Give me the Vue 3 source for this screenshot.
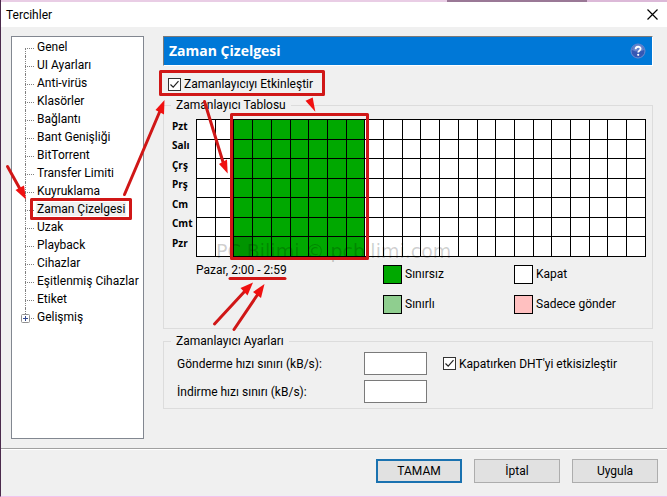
<script setup>
import { ref } from 'vue'

const pages = [
  'Genel',
  'UI Ayarları',
  'Anti-virüs',
  'Klasörler',
  'Bağlantı',
  'Bant Genişliği',
  'BitTorrent',
  'Transfer Limiti',
  'Kuyruklama',
  'Zaman Çizelgesi',
  'Uzak',
  'Playback',
  'Cihazlar',
  'Eşitlenmiş Cihazlar',
  'Etiket',
  'Gelişmiş',
]
const selected = ref('Zaman Çizelgesi')

const days = ['Pzt', 'Salı', 'Çrş', 'Prş', 'Cm', 'Cmt', 'Pzr']

const modes = [
  { id: 'full', label: 'Sınırsız' },
  { id: 'off', label: 'Kapat' },
  { id: 'limited', label: 'Sınırlı' },
  { id: 'seed', label: 'Sadece gönder' },
]

// 7 days x 24 hours, unlimited between 2:00 and 9:00
const schedule = ref(
  days.map(() => Array.from({ length: 24 }, (_, h) => (h >= 2 && h < 9 ? 'full' : 'off'))),
)

const schedulerOn = ref(true)
const disableDht = ref(true)
const uploadLimit = ref('')
const downloadLimit = ref('')

const toggleCell = (d, h) => {
  if (!schedulerOn.value) return
  schedule.value[d][h] = schedule.value[d][h] === 'full' ? 'off' : 'full'
}
</script>

<template>
  <div class="dialog">
    <div class="desktop-strip"></div>
    <header class="titlebar">
      <span>Tercihler</span>
      <button class="close" type="button" aria-label="Kapat">
        <svg width="11" height="11" viewBox="0 0 11 11">
          <path d="M.5.5l10 10M10.5.5l-10 10" stroke="#000" stroke-width="1.2" fill="none" />
        </svg>
      </button>
    </header>

    <div class="content">
      <nav class="tree">
        <ul>
          <li v-for="page in pages" :key="page" :class="{ parent: page === 'Gelişmiş' }">
            <span v-if="page === 'Gelişmiş'" class="expander">
              <svg width="9" height="9" viewBox="0 0 9 9">
                <rect x=".5" y=".5" width="8" height="8" rx="1" fill="#fff" stroke="#919191" />
                <path d="M2 4.5h5M4.5 2v5" stroke="#34498f" />
              </svg>
            </span>
            <a href="#" :class="{ active: page === selected }" @click.prevent="selected = page">{{
              page
            }}</a>
          </li>
        </ul>
      </nav>

      <main class="panel">
        <div class="panel-title">
          <h1>Zaman Çizelgesi</h1>
          <button class="help" type="button" aria-label="Yardım">
            <svg width="16" height="16" viewBox="0 0 16 16">
              <circle cx="8" cy="8" r="7" fill="#3558b4" stroke="#6d8bd0" />
              <path d="M2 7a6 6 0 0 1 12 0q-6 3-12 0z" fill="#6482cc" />
              <path
                d="M5.6 6.2c0-3.2 5-3.2 5-.4 0 1.7-2.400 1.900-2.400 3.700"
                fill="none"
                stroke="#fff"
                stroke-width="1.8"
              />
              <circle cx="8.2" cy="11.800" r="1.100" fill="#fff" />
            </svg>
          </button>
        </div>

        <label class="check enable">
          <input v-model="schedulerOn" type="checkbox" />
          <span>Zamanlayıcıyı Etkinleştir</span>
        </label>

        <fieldset class="group">
          <legend>Zamanlayıcı Tablosu</legend>
          <table class="schedule">
            <tbody>
              <tr v-for="(day, d) in days" :key="day">
                <th scope="row">{{ day }}</th>
                <td
                  v-for="(mode, h) in schedule[d]"
                  :key="h"
                  :class="[mode, { current: d === 6 && h === 2 }]"
                  @click="toggleCell(d, h)"
                ></td>
              </tr>
            </tbody>
          </table>
          <div class="below">
            <span class="time">Pazar, 2:00 - 2:59</span>
            <ul class="key">
              <li v-for="mode in modes" :key="mode.id">
                <i class="swatch" :class="mode.id"></i>
                <span>{{ mode.label }}</span>
              </li>
            </ul>
          </div>
        </fieldset>

        <fieldset class="group">
          <legend>Zamanlayıcı Ayarları</legend>
          <div class="limits">
            <label for="upload">Gönderme hızı sınırı (kB/s):</label>
            <input id="upload" v-model="uploadLimit" type="text" />
            <label class="check dht">
              <input v-model="disableDht" type="checkbox" />
              <span>Kapatırken DHT'yi etkisizleştir</span>
            </label>
            <label for="download">İndirme hızı sınırı (kB/s):</label>
            <input id="download" v-model="downloadLimit" type="text" />
          </div>
        </fieldset>
      </main>
    </div>

    <footer class="actions">
      <button class="default" type="button">TAMAM</button>
      <button type="button">İptal</button>
      <button type="button">Uygula</button>
    </footer>

    <span class="watermark">PC Bilimi © pcbilimi.com</span>

    <!-- Red guide marks drawn over the dialog -->
    <svg class="marks">
      <g class="line">
        <rect x="31.5" y="199.5" width="99" height="19" />
        <rect x="160.5" y="71.5" width="163" height="23" />
        <rect x="231.5" y="114.5" width="136" height="144" />
        <path d="M230 278.5H285" />
        <path d="M7.5 166.5L20 189" />
        <path d="M124.5 194.5L160 111" />
        <path d="M204.5 101.5L223 162" />
        <path d="M214.5 324L245 291" />
        <path d="M234 329.5L258 294" />
      </g>
      <g class="head">
        <path d="M26 199.5L15.5 190L24 185.5z" />
        <path d="M164.5 100L155.5 110L164 114.5z" />
        <path d="M227.7 173.5L219 164L227 159.5z" />
        <path d="M315.3 111.7L305.5 100.7L312.7 97.5z" />
        <path d="M253 282.5L240.5 288L247.5 295.5z" />
        <path d="M264.5 284L253 292L261 298z" />
      </g>
    </svg>
  </div>
</template>

<style>
body {
  margin: 0;
}
</style>

<style scoped>
.dialog {
  position: relative;
  display: flex;
  flex-direction: column;
  box-sizing: border-box;
  min-height: 100vh;
  border-left: 1px solid #4b2a4c;
  border-bottom: 1px solid #f3c3ee;
  background: #f0f0f0;
  color: #000;
  font-family: Roboto, 'Open Sans', sans-serif;
  font-size: 12px;
  line-height: 18px;
}

button,
input {
  font: inherit;
  color: inherit;
}

ul {
  list-style: none;
  margin: 0;
  padding: 0;
}

.desktop-strip {
  height: 2px;
  background: linear-gradient(90deg, #e9cde5 67%, #9a7896 67%, #9a7896 88%, #dcb9d8 88%);
}

.titlebar {
  display: flex;
  align-items: center;
  justify-content: space-between;
  height: 25px;
  padding: 0 9px 0 5px;
  background: #fff;
}

.close,
.help {
  display: flex;
  padding: 0;
  border: 0;
  background: none;
}

.content {
  display: flex;
  flex: 1;
  gap: 19px;
  padding: 9px 14px 9px 10px;
}

.tree {
  flex: none;
  box-sizing: border-box;
  width: 133px;
  padding: 1px 0 0 13px;
  border: 1px solid #828790;
  background: #fff;
}

.tree li {
  position: relative;
  height: 18px;
  padding-left: 11px;
  white-space: nowrap;
}

.tree li::before {
  content: '';
  position: absolute;
  top: 0;
  left: 0;
  height: 18px;
  border-left: 1px dotted #808080;
}

.tree li:first-child::before {
  top: 10px;
  height: 8px;
}

.tree li:last-child::before {
  height: 6px;
}

.tree li::after {
  content: '';
  position: absolute;
  top: 10px;
  left: 0;
  width: 9px;
  border-top: 1px dotted #808080;
}

.expander {
  position: absolute;
  z-index: 1;
  top: 6px;
  left: -4px;
  display: flex;
}

.tree a {
  padding: 0 1px;
  color: #000;
  text-decoration: none;
}

.tree a.active {
  background: #f0f0f0;
}

.panel {
  flex: 1;
  min-width: 0;
}

.panel-title {
  display: flex;
  align-items: center;
  justify-content: space-between;
  box-sizing: border-box;
  height: 30px;
  padding: 0 6px 0 5px;
  border: 1px solid;
  border-color: #7a7a7a #fff #fff #7a7a7a;
  background: #0078d7;
}

.panel-title h1 {
  margin: 0;
  color: #fff;
  font-family: 'Open Sans', sans-serif;
  font-size: 14px;
  font-weight: 700;
}

.check {
  display: flex;
  align-items: center;
  gap: 3px;
  white-space: nowrap;
}

.check input {
  appearance: none;
  flex: none;
  width: 13px;
  height: 13px;
  margin: 0;
  border: 1px solid #333;
  background: #fff;
}

.check input:checked {
  background: #fff
    url("data:image/svg+xml,%3Csvg xmlns='http://www.w3.org/2000/svg' viewBox='0 0 11 11'%3E%3Cpath d='M1.5 5.5l2.7 2.7 5.3-6' fill='none' stroke='%23222' stroke-width='1.2'/%3E%3C/svg%3E");
}

.enable {
  width: max-content;
  margin: 9px 0 3px 5px;
}

.group {
  min-width: 0;
  margin: 0 0 3px;
  padding: 0;
  border: 1px solid #dcdcdc;
}

.group legend {
  margin-left: 7px;
  padding: 0 5px;
}

.schedule {
  table-layout: fixed;
  width: calc(100% - 14px);
  height: 138px;
  margin: 5px 6px 0 8px;
  border-collapse: collapse;
}

.schedule th {
  width: 24px;
  padding: 0;
  font-family: 'Open Sans', sans-serif;
  font-size: 10px;
  line-height: 12px;
  text-align: left;
  vertical-align: top;
}

.schedule td {
  padding: 0;
  border: 1px solid #000;
}

.full {
  background: #00a800;
}

.off {
  background: #fff;
}

.limited {
  background: #8fce8f;
}

.seed {
  background: #ffc0c0;
}

.schedule .current {
  background: #009400;
}

.below {
  display: flex;
  padding: 8px 0 14px 32px;
}

.time {
  flex: none;
  width: 187px;
  height: 18px;
  margin-top: -4px;
}

.key {
  display: grid;
  grid-template-columns: 131px 1fr;
  row-gap: 11px;
  flex: 1;
}

.key li {
  display: flex;
  gap: 3px;
  white-space: nowrap;
}

.swatch {
  box-sizing: border-box;
  width: 19px;
  height: 19px;
  border: 1px solid #000;
}

.limits {
  display: grid;
  grid-template-columns: 187px 63px 1fr;
  gap: 5px 0;
  align-items: center;
  padding: 2px 0 5px 13px;
}

.limits > input {
  box-sizing: border-box;
  width: 63px;
  height: 23px;
  padding: 0 4px;
  border: 1px solid #7a7a7a;
  background: #fff;
}

.dht {
  margin-left: 16px;
}

.actions {
  display: flex;
  justify-content: flex-end;
  gap: 12px;
  padding: 10px 9px 13px;
  border-top: 1px solid #a0a0a0;
  box-shadow: inset 0 1px #fff;
}

.actions button {
  width: 86px;
  height: 24px;
  padding: 0;
  border: 1px solid #adadad;
  background: #e1e1e1;
}

.actions .default {
  border: 2px solid #1a72b0;
}

.watermark {
  position: absolute;
  top: 240px;
  left: 215px;
  color: rgba(0, 0, 0, 0.2);
  font-family: 'DejaVu Sans', Verdana, sans-serif;
  font-size: 19px;
  line-height: 22px;
  white-space: nowrap;
  pointer-events: none;
}

.marks {
  position: absolute;
  top: 0;
  left: -1px;
  width: 100%;
  height: 100%;
  pointer-events: none;
}

.line {
  fill: none;
  stroke: #d01717;
  stroke-width: 3;
  stroke-linecap: round;
  stroke-linejoin: round;
}

.head {
  fill: #f01010;
}
</style>
